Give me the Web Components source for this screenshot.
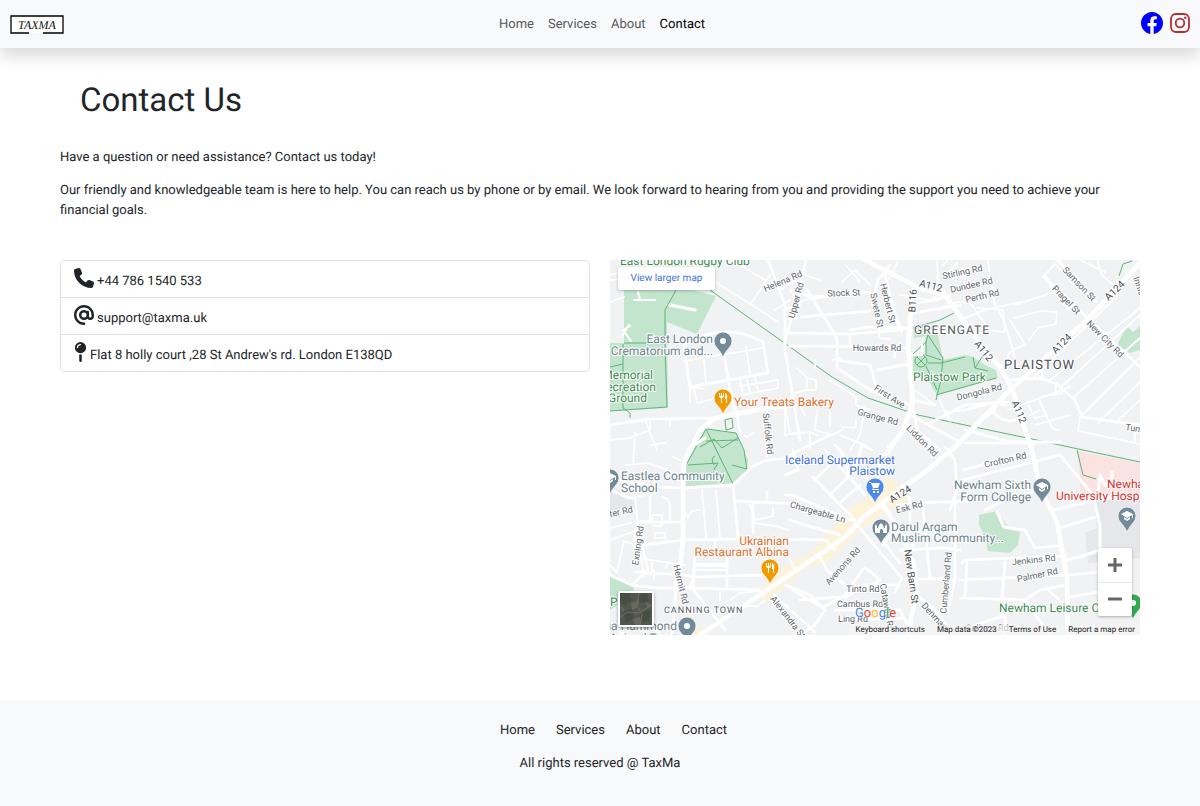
<!DOCTYPE html>
<html lang="en">
<head>
<meta charset="utf-8">
<meta name="viewport" content="width=device-width, initial-scale=1">
<title>TaxMa – Contact</title>
<style>
  body { margin: 0; background: #fff; color: #212529; font: 13px/20px Roboto, "Liberation Sans", sans-serif; text-rendering: geometricPrecision; }
</style>
</head>
<body>
<contact-page></contact-page>

<template id="page-template">
  <style>
    :host { display: flex; flex-direction: column; min-height: 100vh; }
    main { flex: 1; padding: 0 60px 65px; }
    h1 { margin: 0; padding: 32px 20px 26px; font-size: 33px; line-height: 42px; font-weight: 400; }
    p { margin: 0 0 13px; }
    .columns { display: grid; grid-template-columns: 1fr 1fr; gap: 20px; padding-top: 26px; align-items: start; }
    @media (max-width: 700px) { .columns { grid-template-columns: 1fr; } }
  </style>
  <site-header></site-header>
  <main>
    <h1>Contact Us</h1>
    <p>Have a question or need assistance? Contact us today!</p>
    <p>Our friendly and knowledgeable team is here to help. You can reach us by phone or by email. We look forward to hearing from you and providing the support you need to achieve your financial goals.</p>
    <div class="columns">
      <contact-list>
        <contact-item icon="phone">+44 786 1540 533</contact-item>
        <contact-item icon="at">support@taxma.uk</contact-item>
        <contact-item icon="pin">Flat 8 holly court ,28 St Andrew's rd. London E138QD</contact-item>
      </contact-list>
      <location-map></location-map>
    </div>
  </main>
  <site-footer></site-footer>
</template>

<template id="header-template">
  <style>
    :host { display: block; position: relative; background: #f8f9fb; box-shadow: 0 8px 16px rgba(0,0,0,.15); }
    header { display: grid; grid-template-columns: 1fr auto 1fr; align-items: center; height: 48px; padding: 0 10px; }
    a { color: #595a5b; text-decoration: none; }
    svg { display: block; }
    .brand { justify-self: start; padding-top: 2px; }
    nav { display: flex; gap: 14px; padding: 2px 0 0 4px; }
    nav a[aria-current] { color: #000; }
    .social { justify-self: end; display: flex; gap: 7px; align-items: center; padding-bottom: 2px; }
  </style>
  <header>
    <a class="brand" href="#" aria-label="TaxMa home">
      <svg width="54" height="20" viewBox="0 0 54 20">
        <rect x="1" y="1" width="52" height="17" fill="#fff"/>
        <path d="M19 18H1V1H53V18H33" fill="none" stroke="#000" stroke-width="1.3"/>
        <text x="27" y="14" text-anchor="middle" font-family="Liberation Serif, serif" font-style="italic" font-size="12" fill="#111">TAXMA</text>
      </svg>
    </a>
    <nav aria-label="Main">
      <a href="#">Home</a><a href="#">Services</a><a href="#">About</a><a href="#" aria-current="page">Contact</a>
    </nav>
    <div class="social">
      <a href="#" aria-label="Facebook">
        <svg width="22" height="22" viewBox="0 0 16 16" fill="#00f"><path d="M16 8.049c0-4.446-3.582-8.05-8-8.05C3.58 0-.002 3.603-.002 8.05c0 4.017 2.926 7.347 6.75 7.951v-5.625h-2.03V8.05H6.75V6.275c0-2.017 1.195-3.131 3.022-3.131.876 0 1.791.157 1.791.157v1.98h-1.009c-.993 0-1.303.621-1.303 1.258v1.51h2.218l-.354 2.326H9.25V16c3.824-.604 6.75-3.934 6.75-7.951z"/></svg>
      </a>
      <a href="#" aria-label="Instagram">
        <svg width="20" height="20" viewBox="0 0 20 20" fill="none" stroke="#b22f2f" stroke-width="1.8"><rect x="1" y="1" width="18" height="18" rx="5"/><circle cx="10" cy="10" r="4.3"/><circle cx="15.3" cy="4.7" r="1.2" fill="#b22f2f" stroke="none"/></svg>
      </a>
    </div>
  </header>
</template>

<template id="list-template">
  <style>
    :host { display: block; border: 1px solid #dfe1e4; border-radius: 5px; overflow: hidden; }
    ::slotted(:not(:last-child)) { border-bottom: 1px solid #dfe1e4; }
  </style>
  <slot></slot>
</template>

<template id="item-template">
  <style>
    :host { display: flex; align-items: flex-end; gap: 3px; padding: 7px 13px 5px; min-height: 24px; box-sizing: content-box; }
    svg { display: block; height: 20px; fill: #212529; margin-bottom: 4px; }
    span { line-height: 20px; }
  </style>
  <svg aria-hidden="true"><path/></svg>
  <span><slot></slot></span>
</template>

<template id="footer-template">
  <style>
    :host { display: block; background: #f8f9fb; text-align: center; padding: 21px 0 32px; }
    nav { display: flex; justify-content: center; gap: 21px; padding-left: 27px; }
    a { color: #212529; text-decoration: none; }
    p { margin: 13px 0 0; }
  </style>
  <nav aria-label="Footer"><a href="#">Home</a><a href="#">Services</a><a href="#">About</a><a href="#">Contact</a></nav>
  <p>All rights reserved @ TaxMa</p>
</template>

<template id="map-template">
  <style>
    :host { display: block; position: relative; height: 375px; overflow: hidden; background: #f1f2f4; }
    svg { display: block; }
    .canvas { width: 100%; height: 100%; font-family: Roboto, sans-serif; }
    .canvas text { paint-order: stroke; stroke: #fff; stroke-width: 2px; stroke-linejoin: round; }
    .road { font-size: 9px; fill: #60646a; }
    .route { font-size: 10px; fill: #45494f; }
    .poi { font-size: 12px; fill: #6b7f8c; }
    .food { font-size: 12px; fill: #d9712c; }
    .shop { font-size: 12px; fill: #4273e0; }
    .park { font-size: 12px; fill: #3d8a51; }
    .health { font-size: 12px; fill: #d62e2e; }
    .district { font-size: 13px; fill: #4b4e53; letter-spacing: 1px; }
    .suburb { font-size: 12px; fill: #55585d; letter-spacing: 1px; }
    .town { font-size: 9px; fill: #55585d; letter-spacing: 1px; }
    .larger { position: absolute; left: 8px; top: 7px; width: 97px; box-sizing: border-box; background: #fff; border-radius: 2px; box-shadow: 0 1px 3px rgba(0,0,0,.25); color: #4273d8; font-size: 10px; line-height: 23px; text-align: center; text-decoration: none; }
    .layers { position: absolute; left: 8px; bottom: 8px; padding: 0; border: 2px solid #fff; border-radius: 2px; box-shadow: 0 1px 3px rgba(0,0,0,.4); background: #565a50; width: 36px; height: 36px; overflow: hidden; }
    .zoom { position: absolute; right: 8px; bottom: 19px; width: 34px; background: #fff; border-radius: 2px; box-shadow: 0 1px 3px rgba(0,0,0,.3); }
    .zoom button { display: grid; place-items: center; width: 100%; height: 34px; border: 0; padding: 0; background: none; }
    .zoom button + button { box-shadow: inset 0 1px #e6e6e6; }
    .google { position: absolute; left: 245px; bottom: 12px; font-size: 13px; line-height: 18px; text-decoration: none; text-shadow: 0 0 2px #fff, 0 0 2px #fff; }
    .terms { position: absolute; right: 0; bottom: 0; display: flex; gap: 12px; padding: 0 5px; background: rgba(245,245,245,.7); font-size: 8px; line-height: 10px; }
    .terms a, .terms span { color: #222; text-decoration: none; white-space: nowrap; }
    .b { color: #4285f4; } .r { color: #ea4335; } .y { color: #fbbc05; } .g { color: #34a853; }
  </style>
  <svg class="canvas" viewBox="0 0 530 375" preserveAspectRatio="xMidYMid slice" role="img" aria-label="Map of Plaistow, London">
    <g id="areas">
      <path fill="#c3e5cd" d="M14 25H64L106 36L87 74L57 62L58 148L0 151V83H14ZM96 169L126 173L138 200L137 210L122 225L74 228L76 205Q84 185 96 169ZM315 75H328L333 100L355 95L363 97L375 105L386 110L388 118L327 135L318 120L303 117V95L316 94ZM303 68L315 64L322 75L304 78ZM507 85L517 66L523 72L530 66V90L520 93ZM369 255L387 251L400 270L410 272L408 285L400 293L378 291L374 275L369 265ZM0 317L22 323L25 335L8 345L0 350Z"/>
      <path fill="#fbe3e1" d="M467 191L530 203V240L470 232V217Z"/>
      <path fill="#e5e7eb" d="M484 240H530V298L478 303L475 273L487 268ZM0 225L20 238L28 247L0 250Z"/>
      <path fill="#fdf3d8" d="M148 331L173 308L202 292L220 272L242 248L260 236L282 222L292 228L297 241L275 252L250 270L228 292L217 302L195 308L175 327L155 343ZM80 372L92 366L95 375H80ZM275 217L286 220L282 227L275 225Z"/>
    </g>
    <g fill="none" stroke="#5eb478" stroke-width="1">
      <path d="M100 30L180 87L222 117L258 138L308 155L355 165L417 178L473 190L530 202"/>
      <path d="M66 30L55 50V85L57 147L0 151M14 83H55M0 107L13 104V148L20 153V158M13 104V84M96 169L76 205L74 228M96 169L123 224M97 169L126 173L134 190L137 210L122 225L74 228M96 181L128 180M78 205L108 203M90 187L104 179L112 188L128 178M108 203L102 213M122 205L137 209M115 160L122 158L123 168L116 170ZM105 196Q100 198 104 205"/>
      <path d="M303 68L330 60L344 53M303 94L316 82L318 75L333 98L331 120L326 140M316 82V95L331 100M318 103H331L355 97M326 135L386 118M316 106L327 130M305 101a6 6 0 1 0 12 0a6 6 0 1 0-12 0M307 97L315 105M315 97L307 105M363 97L365 108L378 111M365 108L374 94M467 190L473 215L486 219M509 16L513 4L522 1"/>
    </g>
    <g fill="none" stroke="#e5e7ea" stroke-linejoin="round" stroke-linecap="round">
      <g stroke-width="3"><use href="#minor"/></g>
      <g stroke-width="5"><use href="#streets"/></g>
      <g stroke-width="8"><use href="#main"/></g>
    </g>
    <g fill="none" stroke="#fff" stroke-linejoin="round" stroke-linecap="round">
      <path id="minor" stroke-width="2" d="M24 40H45M30 40L28 32M12 76L19 65M20 66L13 70L21 81M74 101L153 88M94 100L96 125M136 86L140 115M80 127V142M84 129L87 143L112 137M130 120L133 135L168 128V120L130 126M137 120L140 132M145 118L148 130M78 126L94 129M0 15L45 5M0 20L30 18M0 42L14 37M105 22L150 50L168 62M130 5L155 20M140 45L160 15M165 50L180 40M170 30L186 20M0 180L20 178L40 170V162M36 162L47 190M25 172L23 205M40 185L55 183M60 160V166M63 197L72 201M123 142L128 157Q128 175 137 177L143 173M157 149V197M175 145V175L190 172M15 205L38 203L70 215M25 237L28 265M20 238L35 235M40 235V260L28 262M52 237Q60 238 60 247V260M42 255H52V266H43ZM73 250L78 257L82 251L90 250M45 273H55V278H45ZM30 290L34 317M33 299L75 305M42 300V315M58 303L56 308M44 310V319M83 310H117V327M83 318L80 326M85 304H117M92 230L96 277M106 230L110 278M140 245L145 260L163 256L163 248M145 263L170 267L178 270M120 340L130 333L150 331M126 346H148L155 340M85 290H105V280M40 350L50 375M110 340V332M15 350H30L33 360M185 310L178 295M190 145L195 155M236 5L250 22M195 15L210 20M180 30L190 45M175 50L195 40L230 35M260 25L245 10L232 22M175 145L180 173M207 150L205 170L222 175L232 170M220 152V166M232 167L246 168V160M187 108L197 118V130L185 133M197 118L206 120V130H198M220 120L246 137V145L260 150M222 100L230 98M205 100V108M175 175L200 172L207 175M200 173V190M255 150L250 175L240 190M230 175L255 185M305 130L325 145M330 140L335 153L355 150M300 95H312V80M295 88L285 90V98M269 60V78L280 79M292 72L285 60V45M277 22L288 2M333 5L338 0M340 10L347 3M327 0L328 22M330 50Q350 37 362 45L378 68M350 60L380 48M378 0L384 42L395 63L408 108M384 48L410 42M404 58L430 51L447 52L446 64L428 68L419 80M405 45L450 30M400 60L415 84L400 92L396 100M400 93L405 88M367 48L393 50L395 72L378 70M433 17L445 4L470 30M436 20L458 50L466 42M447 0L472 25M455 12L487 42M470 0L495 12M487 0L492 15L502 24M434 15L450 33M424 117L510 33M440 120L530 48M450 128L530 55M464 137L530 78M472 155L530 97M488 163L530 122M505 163L530 140M432 120V110M470 157L468 171L530 184M525 165V183M398 150L460 127M418 145L425 158L437 155M430 142L442 168L448 170M425 165L460 155M420 155L430 150M452 125V133L430 137V142M446 125L445 135M0 280L28 270M0 305L7 312L14 281L28 286M0 268L25 262M290 35L320 40L335 31"/>
      <path id="streets" stroke-width="3" d="M74 85Q95 72 113 72Q130 70 153 82L158 113L80 127ZM114 95L124 152M80 127L74 88M0 165L40 159L105 158M180 145L157 148M95 178L77 190M158 0L175 45L175 90L185 150L190 180M196 0L187 40L175 80M180 58L260 51M176 73L240 74L290 70M240 70L258 67L300 68M180 86L290 87M240 86V75M196 28L227 78V108L260 130L300 145M226 100L260 105L267 130M267 110L298 104M262 45L268 20L280 5M275 15L285 55L292 70M303 44L325 40L340 35M303 53L350 45M182 30L201 37L260 32M60 45L85 50M73 228L46 227L0 218M73 228L123 225L143 206L157 200L180 198M123 225L128 277M125 241L190 244M143 244V272M157 240V232M28 262H72M33 285L73 280L128 279M28 262L25 280M28 270L38 310L22 325M0 315L22 325L45 328L85 328L150 330M25 312L75 315L83 317L155 315M85 293L83 327M117 293V328M85 305L116 306M82 328L115 370M10 372L15 375M175 235H182L240 260M183 330L212 348L235 335L253 309M210 296L217 310L235 325M175 279L215 280L225 290M180 260L195 265L230 275M203 217L245 260M215 190L255 235M225 185L262 225M204 221L225 200M220 235L240 215L230 190M230 243L250 225M248 200L252 185L262 190M180 195L220 175M243 260L292 318L285 332M273 285L285 270M268 275L290 303M290 290L335 288L350 290M287 245L305 243L360 241M300 240V267L280 268M292 225L300 240M312 240L320 318L345 320M345 240V320L338 350M308 336L325 350L340 370M235 338L255 325H290M225 350H290L300 370M255 307L270 320L255 328M175 325L200 335L215 350L205 365L190 375M164 335L205 372M190 340L230 337M295 320L340 318M300 290L310 270M240 360L293 358M335 187L345 200L347 230L340 250M320 163L355 145L400 142M303 140L325 145M278 187L300 165L315 185M300 155L350 182M340 160L335 150M355 170L400 182H450M353 210L418 193M353 220L450 195L487 240M375 250L395 240L430 230M387 252L394 267L415 270L425 288L448 286M444 250L485 240M450 268L485 257M484 240L490 265V290L470 297L456 300M352 303L355 300L456 296M350 320L455 315M350 338L415 340L430 330L455 325M357 300L355 338M395 302L392 340M415 340L440 375M436 328L455 345M352 370L395 355V375M460 315L490 312M460 337L500 330M402 120L430 118L447 124L465 140L472 157L530 165M375 157L385 150M355 150L385 142L395 145M384 153Q390 160 400 161L412 159M355 183H425M434 17L530 107M447 0L470 22M302 142L307 170L330 190M487 240L490 215M490 215L495 225H502V212M530 235L487 238M66 330L62 375M175 215L188 210L183 190M20 238L0 230"/>
      <path id="main" stroke-width="5" d="M90 375L175 318L235 277L253 258L272 243L315 212L345 187L400 130L477 60L530 3M255 0L288 17L310 28L335 35L355 63L370 83L390 107L402 128L412 160L422 190L430 228L447 262L457 318L458 375M303 30L298 87L303 143L293 170L270 203L262 235M272 243L292 275L303 302L307 328L298 375M105 158L90 170L82 187L74 202L73 228L73 281L70 305L65 330M105 158L158 148L180 146"/>
    </g>
    <g id="labels"></g>
    <g id="pins"></g>
  </svg>
  <a class="larger" href="#">View larger map</a>
  <button class="layers" type="button" aria-label="Show satellite imagery">
    <svg width="32" height="32" viewBox="0 0 32 32">
      <path fill="#54574f" d="M0 0H32V32H0Z"/>
      <path fill="#474e43" d="M0 0H9L12 7L5 13L0 10ZM18 2L27 0L29 8L20 10ZM3 19L12 16L14 25L6 30ZM20 20L31 17L29 28L22 29Z"/>
      <path fill="#69685d" d="M11 10L19 8L18 14L12 17ZM25 9L31 11L28 16ZM13 26L20 24V32H15ZM1 14L5 16L2 19Z"/>
      <path fill="none" stroke="#75705f" d="M0 24L8 19L18 20L32 12M19 0L17 12L22 22L20 32"/>
    </svg>
  </button>
  <a class="google" href="#" aria-label="Google"><span class="b">G</span><span class="r">o</span><span class="y">o</span><span class="b">g</span><span class="g">l</span><span class="r">e</span></a>
  <div class="zoom">
    <button type="button" aria-label="Zoom in"><svg width="16" height="16"><path d="M8 1V15M1 8H15" stroke="#666" stroke-width="3"/></svg></button>
    <button type="button" aria-label="Zoom out"><svg width="16" height="16"><path d="M1 8H15" stroke="#666" stroke-width="3"/></svg></button>
  </div>
  <div class="terms"><a href="#">Keyboard shortcuts</a><span>Map data ©2023</span><a href="#">Terms of Use</a><a href="#">Report a map error</a></div>
</template>

<script>
  class TemplateElement extends HTMLElement {
    constructor() {
      super();
      this.attachShadow({ mode: 'open' })
        .append(document.getElementById(this.constructor.template).content.cloneNode(true));
    }
  }

  class SiteHeader extends TemplateElement { static template = 'header-template'; }
  class SiteFooter extends TemplateElement { static template = 'footer-template'; }
  class ContactList extends TemplateElement { static template = 'list-template'; }
  class ContactPage extends TemplateElement { static template = 'page-template'; }

  // name: [viewBox width, drawn width, path]
  const ICONS = {
    phone: [512, 20, 'M164.9 24.6c-7.7-18.6-28-28.5-47.4-23.2l-88 24C12.1 30.2 0 46 0 64C0 311.4 200.6 512 448 512c18 0 33.8-12.1 38.6-29.5l24-88c5.3-19.4-4.6-39.7-23.2-47.4l-96-40c-16.3-6.8-35.2-2.1-46.3 11.6L304.7 368C234.3 334.7 177.3 277.7 144 207.3L193.3 167c13.7-11.2 18.4-30 11.6-46.3l-40-96z'],
    at: [512, 20, 'M256 64C150 64 64 150 64 256s86 192 192 192c17.7 0 32 14.3 32 32s-14.3 32-32 32C114.6 512 0 397.4 0 256S114.6 0 256 0S512 114.6 512 256v32c0 53-43 96-96 96c-29.3 0-55.6-13.2-73.2-33.9C320 371.1 289.5 384 256 384c-70.7 0-128-57.3-128-128s57.3-128 128-128c27.9 0 53.7 8.9 74.7 24.1c5.7-5 13.1-8.1 21.3-8.1c17.7 0 32 14.3 32 32v80 32c0 17.7 14.3 32 32 32s32-14.3 32-32V256c0-106-86-192-192-192zm64 192a64 64 0 1 0 -128 0 64 64 0 1 0 128 0z'],
    pin: [320, 13, 'M16 144a144 144 0 1 1 288 0A144 144 0 1 1 16 144zM160 80c8.8 0 16-7.2 16-16s-7.2-16-16-16c-53 0-96 43-96 96c0 8.8 7.2 16 16 16s16-7.2 16-16c0-35.3 28.7-64 64-64zM128 480V317.1c10.4 1.9 21.1 2.9 32 2.9s21.6-1 32-2.9V480c0 17.7-14.3 32-32 32s-32-14.3-32-32z']
  };

  class ContactItem extends TemplateElement {
    static template = 'item-template';
    connectedCallback() {
      const [box, width, path] = ICONS[this.getAttribute('icon')];
      const svg = this.shadowRoot.querySelector('svg');
      svg.setAttribute('viewBox', `0 0 ${box} 512`);
      svg.setAttribute('width', width);
      svg.firstElementChild.setAttribute('d', path);
    }
  }

  // [class, text, x, baseline y, rotation, anchor]
  const LABELS = [
    ['road', 'Helena Rd', 174, 24, -23, 'middle'], ['road', 'Upper Rd', 189, 41, -75, 'middle'],
    ['road', 'Stock St', 234, 36, -2, 'middle'], ['road', 'Swete St', 264, 51, 78, 'middle'],
    ['road', 'Herbert St', 275, 44, 76, 'middle'], ['road', 'Howards Rd', 267, 91, 0, 'middle'],
    ['road', 'Stirling Rd', 353, 15, -12, 'middle'], ['road', 'Dundee Rd', 362, 28, -13, 'middle'],
    ['road', 'Perth Rd', 373, 39, -13, 'middle'], ['road', 'Samson St', 467, 26, 46, 'middle'],
    ['road', 'Pragel St', 454, 42, 46, 'middle'], ['road', 'Innis', 523, 18, 70, 'start'],
    ['road', 'New City Rd', 493, 81, 45, 'middle'], ['road', 'Dongola Rd', 370, 135, -14, 'middle'],
    ['road', 'First Ave', 278, 139, 33, 'middle'], ['road', 'Grange Rd', 267, 160, 15, 'middle'],
    ['road', 'Liddon Rd', 310, 183, 45, 'middle'], ['road', 'Suffolk Rd', 155, 174, 84, 'middle'],
    ['road', 'Tun', 515, 170, 9, 'start'], ['road', 'Crofton Rd', 396, 203, -13, 'middle'],
    ['road', 'Esk Rd', 300, 250, -14, 'middle'], ['road', 'Chargeable Ln', 207, 255, 16, 'middle'],
    ['road', 'Avenons Rd', 235, 308, -48, 'middle'], ['road', 'Tinto Rd', 253, 332, 0, 'middle'],
    ['road', 'Cambus Rd', 250, 347, 0, 'middle'], ['road', 'Ling Rd', 243, 362, 0, 'middle'],
    ['road', 'Catawba Rd', 274, 348, 80, 'middle'], ['road', 'Cumberland Rd', 339, 323, -85, 'middle'],
    ['road', 'Denmark', 311, 346, 48, 'start'], ['road', 'Jenkins Rd', 424, 303, -6, 'middle'],
    ['road', 'Palmer Rd', 428, 318, -12, 'middle'], ['road', 'Exning Rd', 31, 286, -82, 'middle'],
    ['road', 'Hermit Rd', 68, 325, 76, 'middle'], ['road', 'ter Rd', 0, 257, -12, 'start'],
    ['road', 'Alexandra St', 160, 339, 52, 'start'], ['road', 'Gallops Rd', 377, 371, 0, 'middle'],
    ['route', 'A112', 320, 29, 14, 'middle'], ['route', 'B116', 306, 41, -86, 'middle'],
    ['route', 'A112', 371, 93, 51, 'middle'], ['route', 'A124', 507, 33, -44, 'middle'],
    ['route', 'A124', 454, 86, -45, 'middle'], ['route', 'A112', 406, 153, 68, 'middle'],
    ['route', 'A124', 292, 237, -32, 'middle'], ['route', 'New Barn St', 298, 317, 82, 'middle'],
    ['park', 'East London Rugby Club', 10, 5, 0, 'start'], ['poi', 'East London', 103, 83, 0, 'end'],
    ['poi', 'Crematorium and...', 103, 95, 0, 'end'], ['park', 'Memorial', 43, 119, 0, 'end'],
    ['park', 'ecreation', 46, 131, 0, 'end'], ['park', 'Ground', 37, 142, 0, 'end'],
    ['food', 'Your Treats Bakery', 124, 146, 0, 'start'], ['park', 'Plaistow Park', 303, 121, 0, 'start'],
    ['suburb', 'GREENGATE', 304, 74, 0, 'start'], ['district', 'PLAISTOW', 394, 109, 0, 'start'],
    ['shop', 'Iceland Supermarket', 285, 204, 0, 'end'], ['shop', 'Plaistow', 285, 215, 0, 'end'],
    ['poi', 'Eastlea Community', 11, 220, 0, 'start'], ['poi', 'School', 11, 232, 0, 'start'],
    ['poi', 'Newham Sixth', 421, 229, 0, 'end'], ['poi', 'Form College', 421, 241, 0, 'end'],
    ['health', 'Newha', 497, 228, 0, 'start'], ['health', 'University Hosp', 446, 240, 0, 'start'],
    ['poi', 'Darul Arqam', 281, 271, 0, 'start'], ['poi', 'Muslim Community...', 281, 282, 0, 'start'],
    ['food', 'Ukrainian', 179, 285, 0, 'end'], ['food', 'Restaurant Albina', 179, 296, 0, 'end'],
    ['town', 'CANNING TOWN', 54, 353, 0, 'start'], ['park', 'Newham Leisure C', 389, 352, 0, 'start'],
    ['park', 'Pa', 0, 346, 0, 'start'], ['poi', 'ia Hammond', 67, 370, 0, 'end'],
    ['poi', 'Animal Trust', 67, 382, 0, 'end']
  ];

  const DOT = '<circle r="3"/>';
  const FORK = '<path d="M-4-5V-2Q-4 0-2 0V5H-1V0Q1 0 1-2V-5H0V-2H-1V-5H-2V-2H-3V-5ZM2-5Q5-4 4 1V5H3V1H2Z"/>';
  const CAP = '<path d="M-6-2L0-5L6-2V2H5V-1L0 2ZM-3 1L0 3L3 1V3L0 5L-3 3Z"/>';
  const CART = '<path d="M-6-5H-4L-3-4H5L3 1H-2L-1 2H4V3H-3L-2 1L-4-4H-6ZM-2 4H0V6H-2ZM2 4H4V6H2Z"/>';
  const MOSQUE = '<path d="M-6 5V-2L-5-4L-4-2V0H-3Q-3-3 0-5Q3-3 3 0H4V-2L5-4L6-2V5H2V2Q0 0-1 2V5Z"/>';
  // [tip x, tip y, colour, glyph]
  const PINS = [
    [113, 97, '#738b98', DOT], [113, 154, '#f29900', FORK], [265, 243, '#4d88ee', CART],
    [271, 284, '#738b98', MOSQUE], [160, 324, '#f29900', FORK], [432, 243, '#738b98', CAP],
    [517, 272, '#738b98', CAP], [0, 234, '#738b98', CAP], [77, 382, '#738b98', DOT], [523, 359, '#34a853', DOT]
  ];

  class LocationMap extends TemplateElement {
    static template = 'map-template';
    connectedCallback() {
      const find = id => this.shadowRoot.getElementById(id);
      find('labels').innerHTML = LABELS.map(([kind, text, x, y, turn, anchor]) =>
        `<text class="${kind}" text-anchor="${anchor}" transform="translate(${x} ${y}) rotate(${turn})">${text}</text>`).join('');
      find('pins').innerHTML = PINS.map(([x, y, colour, glyph]) =>
        `<g transform="translate(${x} ${y})"><path fill="${colour}" stroke="#fff" stroke-width=".7" d="M0 0Q-2-5-6-9Q-9-12-9-16A9 9 0 0 1 9-16Q9-12 6-9Q2-5 0 0Z"/><g fill="#fff" transform="translate(0 -16)">${glyph}</g></g>`).join('');
    }
  }

  customElements.define('site-header', SiteHeader);
  customElements.define('site-footer', SiteFooter);
  customElements.define('contact-list', ContactList);
  customElements.define('contact-item', ContactItem);
  customElements.define('location-map', LocationMap);
  customElements.define('contact-page', ContactPage);
</script>
</body>
</html>
